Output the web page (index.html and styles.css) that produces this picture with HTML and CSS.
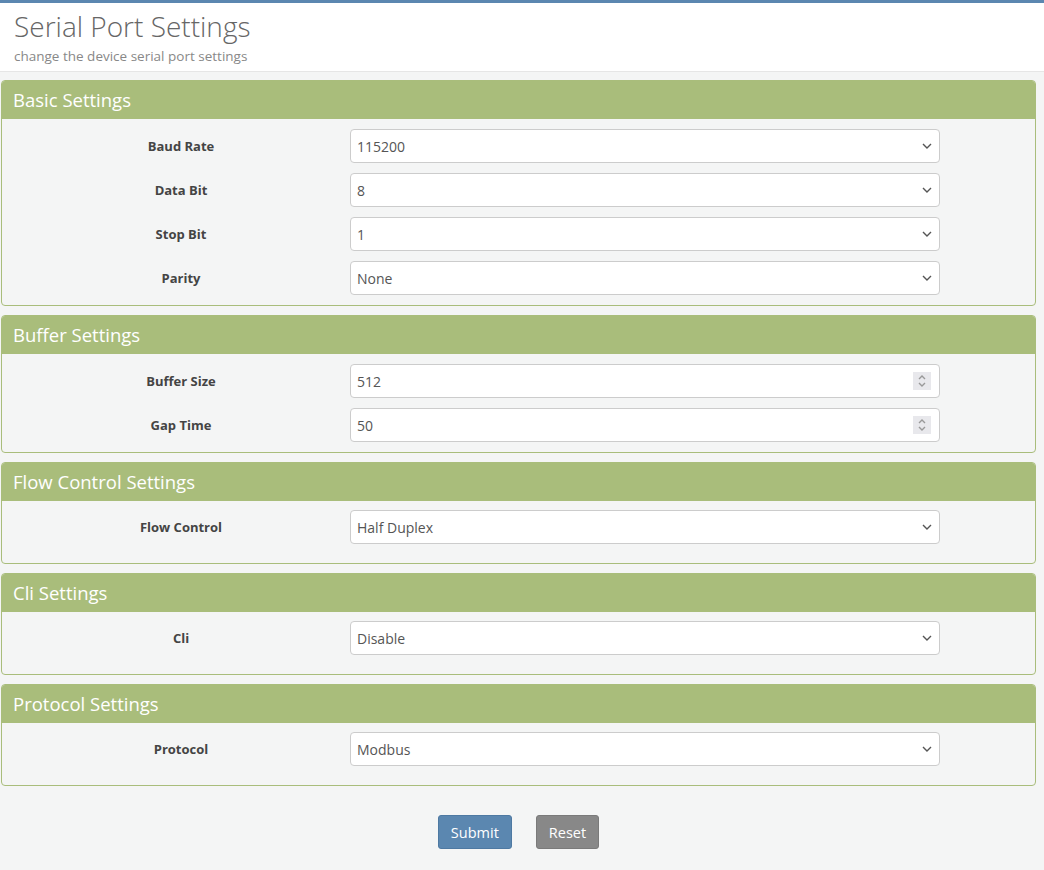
FILE: index.html
```html
<!DOCTYPE html>
<html lang="en">
<head>
<meta charset="UTF-8">
<meta name="viewport" content="width=device-width, initial-scale=1.0">
<title>Serial Port Settings</title>
<link rel="stylesheet" href="styles.css">
</head>
<body>
    <div class="page-header">
        <h1>Serial Port Settings</h1>
        <p>change the device serial port settings</p>
    </div>

    <div class="content">
        <div class="panel">
            <div class="panel-heading">Basic Settings</div>
            <div class="panel-body">
                <div class="form-row">
                    <label>Baud Rate</label>
                    <div class="select"><span>115200</span><svg viewBox="0 0 10 6"><path d="M1 1l4 4 4-4"/></svg></div>
                </div>
                <div class="form-row">
                    <label>Data Bit</label>
                    <div class="select"><span>8</span><svg viewBox="0 0 10 6"><path d="M1 1l4 4 4-4"/></svg></div>
                </div>
                <div class="form-row">
                    <label>Stop Bit</label>
                    <div class="select"><span>1</span><svg viewBox="0 0 10 6"><path d="M1 1l4 4 4-4"/></svg></div>
                </div>
                <div class="form-row">
                    <label>Parity</label>
                    <div class="select"><span>None</span><svg viewBox="0 0 10 6"><path d="M1 1l4 4 4-4"/></svg></div>
                </div>
            </div>
        </div>

        <div class="panel">
            <div class="panel-heading">Buffer Settings</div>
            <div class="panel-body">
                <div class="form-row">
                    <label>Buffer Size</label>
                    <div class="select number"><span>512</span><i class="spin"><svg viewBox="0 0 10 16"><path d="M2 6l3-3 3 3M2 10l3 3 3-3"/></svg></i></div>
                </div>
                <div class="form-row">
                    <label>Gap Time</label>
                    <div class="select number"><span>50</span><i class="spin"><svg viewBox="0 0 10 16"><path d="M2 6l3-3 3 3M2 10l3 3 3-3"/></svg></i></div>
                </div>
            </div>
        </div>

        <div class="panel">
            <div class="panel-heading">Flow Control Settings</div>
            <div class="panel-body single">
                <div class="form-row">
                    <label>Flow Control</label>
                    <div class="select"><span>Half Duplex</span><svg viewBox="0 0 10 6"><path d="M1 1l4 4 4-4"/></svg></div>
                </div>
            </div>
        </div>

        <div class="panel">
            <div class="panel-heading">Cli Settings</div>
            <div class="panel-body single">
                <div class="form-row">
                    <label>Cli</label>
                    <div class="select"><span>Disable</span><svg viewBox="0 0 10 6"><path d="M1 1l4 4 4-4"/></svg></div>
                </div>
            </div>
        </div>

        <div class="panel">
            <div class="panel-heading">Protocol Settings</div>
            <div class="panel-body single">
                <div class="form-row">
                    <label>Protocol</label>
                    <div class="select"><span>Modbus</span><svg viewBox="0 0 10 6"><path d="M1 1l4 4 4-4"/></svg></div>
                </div>
            </div>
        </div>

        <div class="actions">
            <button class="btn-primary">Submit</button>
            <button class="btn-default">Reset</button>
        </div>
    </div>
</body>
</html>
```

FILE: styles.css
```css
body {
    margin: 0;
    padding: 0;
    background-color: #f4f5f5;
    font-family: 'Open Sans', 'Noto Sans', sans-serif;
    color: #333;
}

.page-header {
    background-color: white;
    border-top: 3px solid #5b87b0;
    border-bottom: 1px solid #e6e6e6;
    padding: 4px 14px 5px;
    height: 59px;
}

.page-header h1 {
    margin: 0;
    font-size: 28px;
    font-weight: 300;
    color: #666;
    line-height: 38px;
}

.page-header p {
    margin: 3px 0 0;
    font-size: 13.5px;
    color: #888;
    line-height: 16px;
}

.content {
    padding: 8px 8px 0 1px;
}

.panel {
    border: 1px solid #a9bd7b;
    border-radius: 4px;
    margin-bottom: 9px;
    background-color: #f4f5f5;
}

.panel-heading {
    background-color: #a9bd7b;
    color: white;
    font-size: 18.5px;
    height: 38px;
    line-height: 37px;
    padding: 0 11px;
    border-radius: 3px 3px 0 0;
}

.panel-body {
    padding: 10px 0 0;
}

.panel-body.single {
    padding: 9px 0 9px;
}

.form-row {
    display: grid;
    grid-template-columns: 318px 590px;
    gap: 10px;
    align-items: center;
    padding-left: 20px;
    margin-bottom: 10px;
}

.form-row label {
    font-size: 13px;
    font-weight: 700;
    color: #444;
    text-align: center;
}

.select {
    height: 32px;
    background-color: white;
    border: 1px solid #ccc;
    border-radius: 4px;
    display: flex;
    align-items: center;
    justify-content: space-between;
    padding: 0 6px 0 6px;
    font-size: 14px;
    color: #555;
}

.select svg {
    width: 10px;
    height: 6px;
    fill: none;
    stroke: #555;
    stroke-width: 1.4;
    margin-right: 1px;
}

.spin {
    width: 18px;
    height: 18px;
    background-color: #e8e8ec;
    display: flex;
    align-items: center;
    justify-content: center;
    margin-right: 2px;
}

.spin svg {
    width: 10px;
    height: 16px;
    stroke: #999;
    margin: 0;
}

.actions {
    display: flex;
    justify-content: center;
    gap: 24px;
    padding: 20px 0 0;
    margin-left: 0;
}

button {
    font-family: inherit;
    font-size: 14.5px;
    color: white;
    height: 34px;
    border-radius: 3px;
    cursor: pointer;
    padding: 0 12px;
}

.btn-primary {
    background-color: #5b87b0;
    border: 1px solid #4e79a2;
}

.btn-default {
    background-color: #888;
    border: 1px solid #7a7a7a;
}
```
